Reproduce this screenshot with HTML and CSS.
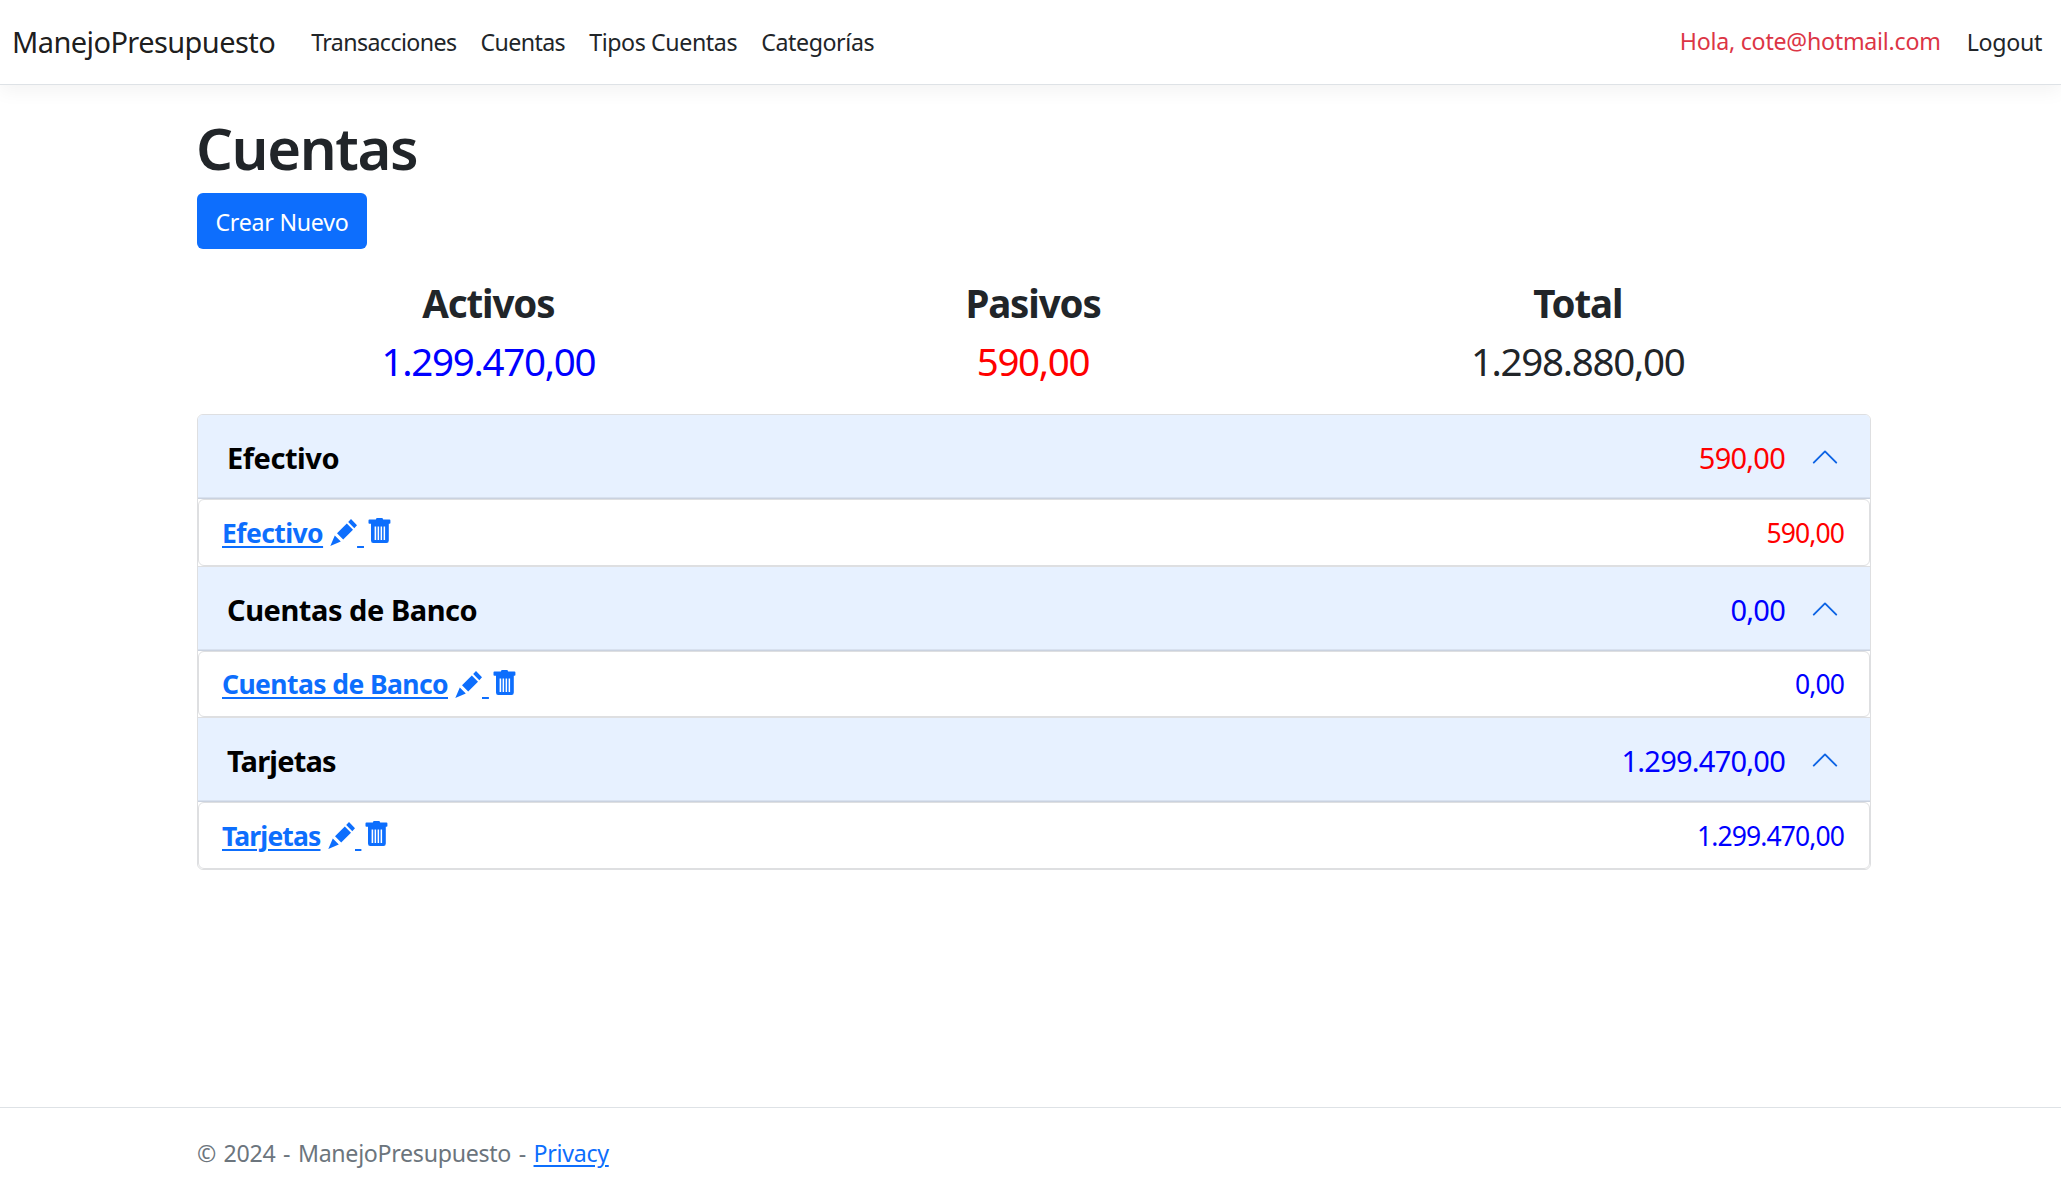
FILE: index.html
```
<!DOCTYPE html>
<html lang="es">
<head>
<meta charset="utf-8">
<title>Cuentas - ManejoPresupuesto</title>
<link rel="stylesheet" href="styles.css">
</head>
<body>
<svg class="sprite" aria-hidden="true">
  <symbol id="pencil" viewBox="0 0 27 27"><path d="M21 0L27 6.3L24.3 9.3L18.2 3ZM16.8 4.6L23 10.8L13.2 20.4L7 14.2ZM4.8 16.4L10.8 22.5L0.3 27Z"/></symbol>
  <symbol id="trash" viewBox="0 0 23 26"><path fill-rule="evenodd" d="M8.6 0H14.4L15.2 1.6H21.5Q22.4 1.6 22.4 2.5V5Q22.4 5.8 21.5 5.8H20.8V22.5Q20.8 25 18.5 25H5.2Q3 25 3 22.5V5.8H1.4Q.5 5.8 .5 5V2.5Q.5 1.6 1.4 1.6H7.8ZM6.6 8.5V22H8.2V8.5ZM9.6 8.5V22H11.1V8.5ZM12.6 8.5V22H14.1V8.5ZM15.6 8.5V22H17.1V8.5Z"/></symbol>
  <symbol id="chevron" viewBox="0 0 16 16"><path d="M2 11L8 5L14 11" fill="none" stroke="#0c63e4" stroke-width="1" stroke-linecap="round" stroke-linejoin="round"/></symbol>
</svg>

<header class="navbar">
  <a class="brand" href="#">ManejoPresupuesto</a>
  <nav class="nav">
    <a class="nav-link" href="#">Transacciones</a>
    <a class="nav-link" href="#">Cuentas</a>
    <a class="nav-link wide" href="#">Tipos Cuentas</a>
    <a class="nav-link wide" href="#">Categorías</a>
  </nav>
  <span class="greeting">Hola, cote@hotmail.com</span>
  <a class="logout" href="#">Logout</a>
</header>

<main class="container">
  <h1>Cuentas</h1>
  <a class="btn" href="#">Crear Nuevo</a>

  <section class="summary">
    <div><p class="label">Activos</p><p class="active">1.299.470,00</p></div>
    <div><p class="label">Pasivos</p><p class="passive">590,00</p></div>
    <div><p class="label">Total</p><p>1.298.880,00</p></div>
  </section>

  <section class="accordion">
    <article class="item">
      <button class="item-header"><span class="name">Efectivo</span><span class="passive">590,00</span><svg class="chevron"><use href="#chevron"/></svg></button>
      <div class="row">
        <a class="account" href="#">Efectivo</a>
        <a class="edit" href="#"><svg class="pencil"><use href="#pencil"/></svg><span>&nbsp;</span></a>
        <a class="delete" href="#"><svg class="trash"><use href="#trash"/></svg></a>
        <span class="amount passive">590,00</span>
      </div>
    </article>
    <article class="item">
      <button class="item-header"><span class="name">Cuentas de Banco</span><span class="active">0,00</span><svg class="chevron"><use href="#chevron"/></svg></button>
      <div class="row short">
        <a class="account" href="#">Cuentas de Banco</a>
        <a class="edit" href="#"><svg class="pencil"><use href="#pencil"/></svg><span>&nbsp;</span></a>
        <a class="delete" href="#"><svg class="trash"><use href="#trash"/></svg></a>
        <span class="amount active">0,00</span>
      </div>
    </article>
    <article class="item">
      <button class="item-header"><span class="name tight">Tarjetas</span><span class="active">1.299.470,00</span><svg class="chevron"><use href="#chevron"/></svg></button>
      <div class="row">
        <a class="account tight" href="#">Tarjetas</a>
        <a class="edit" href="#"><svg class="pencil"><use href="#pencil"/></svg><span>&nbsp;</span></a>
        <a class="delete" href="#"><svg class="trash"><use href="#trash"/></svg></a>
        <span class="amount active">1.299.470,00</span>
      </div>
    </article>
  </section>
</main>

<footer class="footer">
  <div class="container">© 2024 - ManejoPresupuesto - <a href="#">Privacy</a></div>
</footer>
</body>
</html>
```
FILE: styles.css
```
* { box-sizing: border-box; }

body {
  margin: 0;
  min-height: 1186px;
  display: flex;
  flex-direction: column;
  background: #fff;
  color: #212529;
  font-family: "Noto Sans", "Open Sans", sans-serif;
  font-size: 23.2px;
}

a { color: #0d6efd; }
p { margin: 0; }
.sprite { display: none; }

.container { width: 1674px; margin-left: 197px; }

.navbar {
  height: 85px;
  display: flex;
  align-items: center;
  padding: 0 19px 0 12px;
  border-bottom: 1px solid #dee2e6;
  box-shadow: 0 6px 18px rgba(0, 0, 0, .05);
  white-space: nowrap;
}
.navbar a { color: #212529; text-decoration: none; }
.navbar .brand {
  margin: 0 24px 1px 0;
  color: rgba(0, 0, 0, .9);
  font-size: 29px;
  letter-spacing: -.58px;
}
.nav { display: flex; flex: 1; }
.nav-link { padding: 0 12px; letter-spacing: -.6px; }
.nav-link.wide { letter-spacing: -.4px; }
.greeting {
  margin-right: 26px;
  padding-bottom: 2px;
  color: #dc3545;
  letter-spacing: -.25px;
}
.logout { letter-spacing: -.3px; }

h1 {
  margin: 27px 0 9px;
  font-size: 58px;
  font-weight: 560;
  line-height: 72px;
  letter-spacing: -1.4px;
  text-indent: -1px;
}

.btn {
  display: block;
  width: 170px;
  height: 56px;
  padding-top: 1px;
  border-radius: 6px;
  background: #0d6efd;
  color: #fff;
  line-height: 56px;
  letter-spacing: -.25px;
  text-align: center;
  text-decoration: none;
}

.summary {
  display: grid;
  grid-template-columns: repeat(3, 1fr);
  margin: 29px 21px 28px 19px;
  font-size: 38.5px;
  line-height: 50px;
  letter-spacing: -1.3px;
  text-align: center;
}
.summary .label { margin-bottom: 8px; font-weight: 700; letter-spacing: -1.15px; }
.active { color: #00f; }
.passive { color: #f00; }

.accordion {
  border: 1px solid #dedfe1;
  border-radius: 6px;
  overflow: hidden;
}
.item + .item { border-top: 1px solid #dedfe1; }
.item-header {
  display: flex;
  align-items: center;
  width: 100%;
  height: 84px;
  padding: 0 30px 0 29px;
  border: 0;
  background: #e7f1ff;
  box-shadow: inset 0 -1.5px 0 rgba(0, 0, 0, .125);
  font: 400 29px "Noto Sans", sans-serif;
  letter-spacing: -.76px;
}
.name {
  flex: 1;
  color: #000;
  font-weight: 700;
  letter-spacing: -.45px;
  text-align: left;
}
.name.tight { letter-spacing: -.8px; }
.chevron { width: 30px; height: 30px; margin-left: 25px; }

.row {
  display: flex;
  align-items: center;
  height: 67px;
  padding: 0 25px 0 23px;
  border: 1px solid #dedfe1;
  border-radius: 6px;
  font-size: 26.5px;
}
.row.short { height: 66px; }
.account {
  margin-right: 7px;
  font-weight: 700;
  letter-spacing: -.58px;
  text-decoration-thickness: 2px;
  text-underline-offset: 3px;
}
.account.tight { letter-spacing: -.85px; }
.edit { display: flex; align-items: center; text-decoration: none; }
.edit span {
  width: 7px;
  overflow: hidden;
  font-weight: 700;
  text-decoration: underline;
  text-decoration-thickness: 2px;
  text-underline-offset: 3px;
}
.pencil { width: 27px; height: 27px; fill: currentColor; }
.delete { display: flex; margin: 0 0 3px 3.5px; }
.trash { width: 23px; height: 26px; fill: currentColor; }
.amount { margin-left: auto; letter-spacing: -.9px; }

.footer {
  height: 79px;
  margin-top: auto;
  padding-top: 27px;
  border-top: 1px solid #dee2e6;
  color: #6c757d;
  line-height: 36px;
  letter-spacing: -.3px;
  word-spacing: 1.9px;
}
.footer a { text-decoration-thickness: 2px; text-underline-offset: 3px; }
```
